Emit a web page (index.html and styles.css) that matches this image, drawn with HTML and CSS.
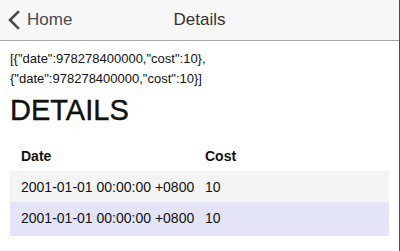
FILE: index.html
```html
<!DOCTYPE html>
<html lang="en">

<head>
  <meta charset="UTF-8" />
  <meta name="viewport" content="width=device-width, initial-scale=1.0" />
  <title>Details</title>
  <link rel="stylesheet" href="styles.css">
</head>

<body>
  <div class="screen">
    <!-- nav bar -->
    <div class="navbar">
      <a class="back" href="#">
        <svg class="chevron" width="12" height="20" viewBox="0 0 12 20">
          <path d="M10 2 L2 10 L10 18" fill="none" stroke="#4a4a4a" stroke-width="2.6" stroke-linecap="square" />
        </svg>
        <span>Home</span>
      </a>
      <div class="title">Details</div>
    </div>

    <div class="content">
      <p class="raw">[{"date":978278400000,"cost":10},<br>{"date":978278400000,"cost":10}]</p>
      <h1>DETAILS</h1>

      <table class="details">
        <thead>
          <tr>
            <th>Date</th>
            <th>Cost</th>
          </tr>
        </thead>
        <tbody>
          <tr class="odd">
            <td>2001-01-01 00:00:00 +0800</td>
            <td>10</td>
          </tr>
          <tr class="even">
            <td>2001-01-01 00:00:00 +0800</td>
            <td>10</td>
          </tr>
        </tbody>
      </table>
    </div>
  </div>
</body>

</html>
```

FILE: styles.css
```css
* {
  box-sizing: border-box;
}
body {
  margin: 0;
  font-family: 'Liberation Sans', Arial, sans-serif;
  color: #111;
  background: #fff;
}
.screen {
  height: 251px;
  border-right: 1px solid #4d4d4d;
}
.navbar {
  position: relative;
  height: 41px;
  background-color: #f7f7f7;
  border-bottom: 1px solid #a6a6a6;
  display: flex;
  align-items: center;
}
.back {
  display: flex;
  align-items: center;
  padding-left: 8px;
  color: #4a4a4a;
  text-decoration: none;
  font-size: 17px;
}
.chevron {
  margin-right: 7px;
}
.title {
  position: absolute;
  left: 0;
  right: 0;
  text-align: center;
  font-size: 17px;
  color: #333;
  pointer-events: none;
}
.content {
  padding: 0 10px;
}
.raw {
  margin: 8px 0 0;
  font-size: 13px;
  line-height: 20px;
}
h1 {
  margin: 4px 0 0;
  font-size: 29px;
  font-weight: normal;
  line-height: 34px;
  -webkit-text-stroke: 0.4px #111;
}
.details {
  width: 100%;
  margin-top: 13px;
  border-collapse: collapse;
  font-size: 14px;
}
.details th,
.details td {
  text-align: left;
  padding: 0;
  height: 31px;
}
.details th:first-child,
.details td:first-child {
  width: 195px;
  padding-left: 11px;
}
.details th {
  font-weight: bold;
}
.odd {
  background-color: #f4f4f4;
}
.even {
  background-color: #e4e4f8;
}
.even td {
  height: 34px;
  padding-bottom: 3px;
}
```
